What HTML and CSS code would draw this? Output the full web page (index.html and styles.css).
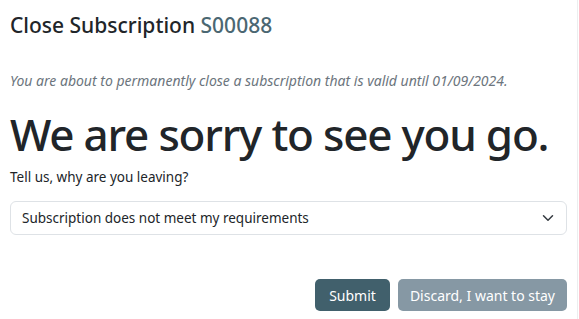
FILE: index.html
```html
<!DOCTYPE html>
<html>
<head>
<meta charset="utf-8">
<link rel="stylesheet" href="styles.css">
</head>
<body>
<div class="page">
  <h1 class="title">Close Subscription <span class="code">S00088</span></h1>
  <p class="note">You are about to permanently close a subscription that is valid until 01/09/2024.</p>
  <h2 class="sorry">We are sorry to see you go.</h2>
  <label class="ask">Tell us, why are you leaving?</label>
  <div class="select">
    <span>Subscription does not meet my requirements</span>
    <svg class="chev" width="12" height="12" viewBox="0 0 16 16"><path d="M2 5l6 6 6-6" fill="none" stroke="#343a40" stroke-width="2" stroke-linecap="round" stroke-linejoin="round"/></svg>
  </div>
  <div class="actions">
    <button class="btn primary">Submit</button>
    <button class="btn secondary">Discard, I want to stay</button>
  </div>
</div>
</body>
</html>
```
FILE: styles.css
```css
html, body { margin: 0; padding: 0; background: #fff; }
body { font-family: "Noto Sans", "Open Sans", sans-serif; color: #212529; }
.page {
  width: 578px;
  height: 319px;
  box-sizing: border-box;
  padding: 0 10px;
  border-right: 1px solid #eceeef;
  overflow: hidden;
}
.title { margin: 0; padding-top: 10px; font-size: 21px; font-weight: 500; line-height: 30px; }
.code { color: #4b6772; }
.note { margin: 31px 0 0; font-size: 14px; font-style: italic; color: #6c757d; line-height: 20px; }
.sorry { margin: 18px 0 0; font-size: 44px; font-weight: 500; line-height: 50px; letter-spacing: -1.2px; white-space: nowrap; }
.ask { display: block; margin-top: 8px; font-size: 13.5px; line-height: 20px; }
.select {
  margin-top: 14px;
  height: 34px;
  box-sizing: border-box;
  border: 1px solid #dee2e6;
  border-radius: 6px;
  display: flex; align-items: center; justify-content: space-between;
  padding: 0 12px 0 11px;
  font-size: 13.5px;
  width: 557px;
}
.actions { display: flex; justify-content: flex-end; gap: 8px; margin-top: 44px; width: 557px; }
.btn {
  font-family: inherit; font-size: 14px; color: #fff; border: none; border-radius: 5px;
  height: 32px; padding: 0 14px;
}
.primary { background: #41606c; }
.secondary { background: #8698a4; padding: 0 12px; }
```
